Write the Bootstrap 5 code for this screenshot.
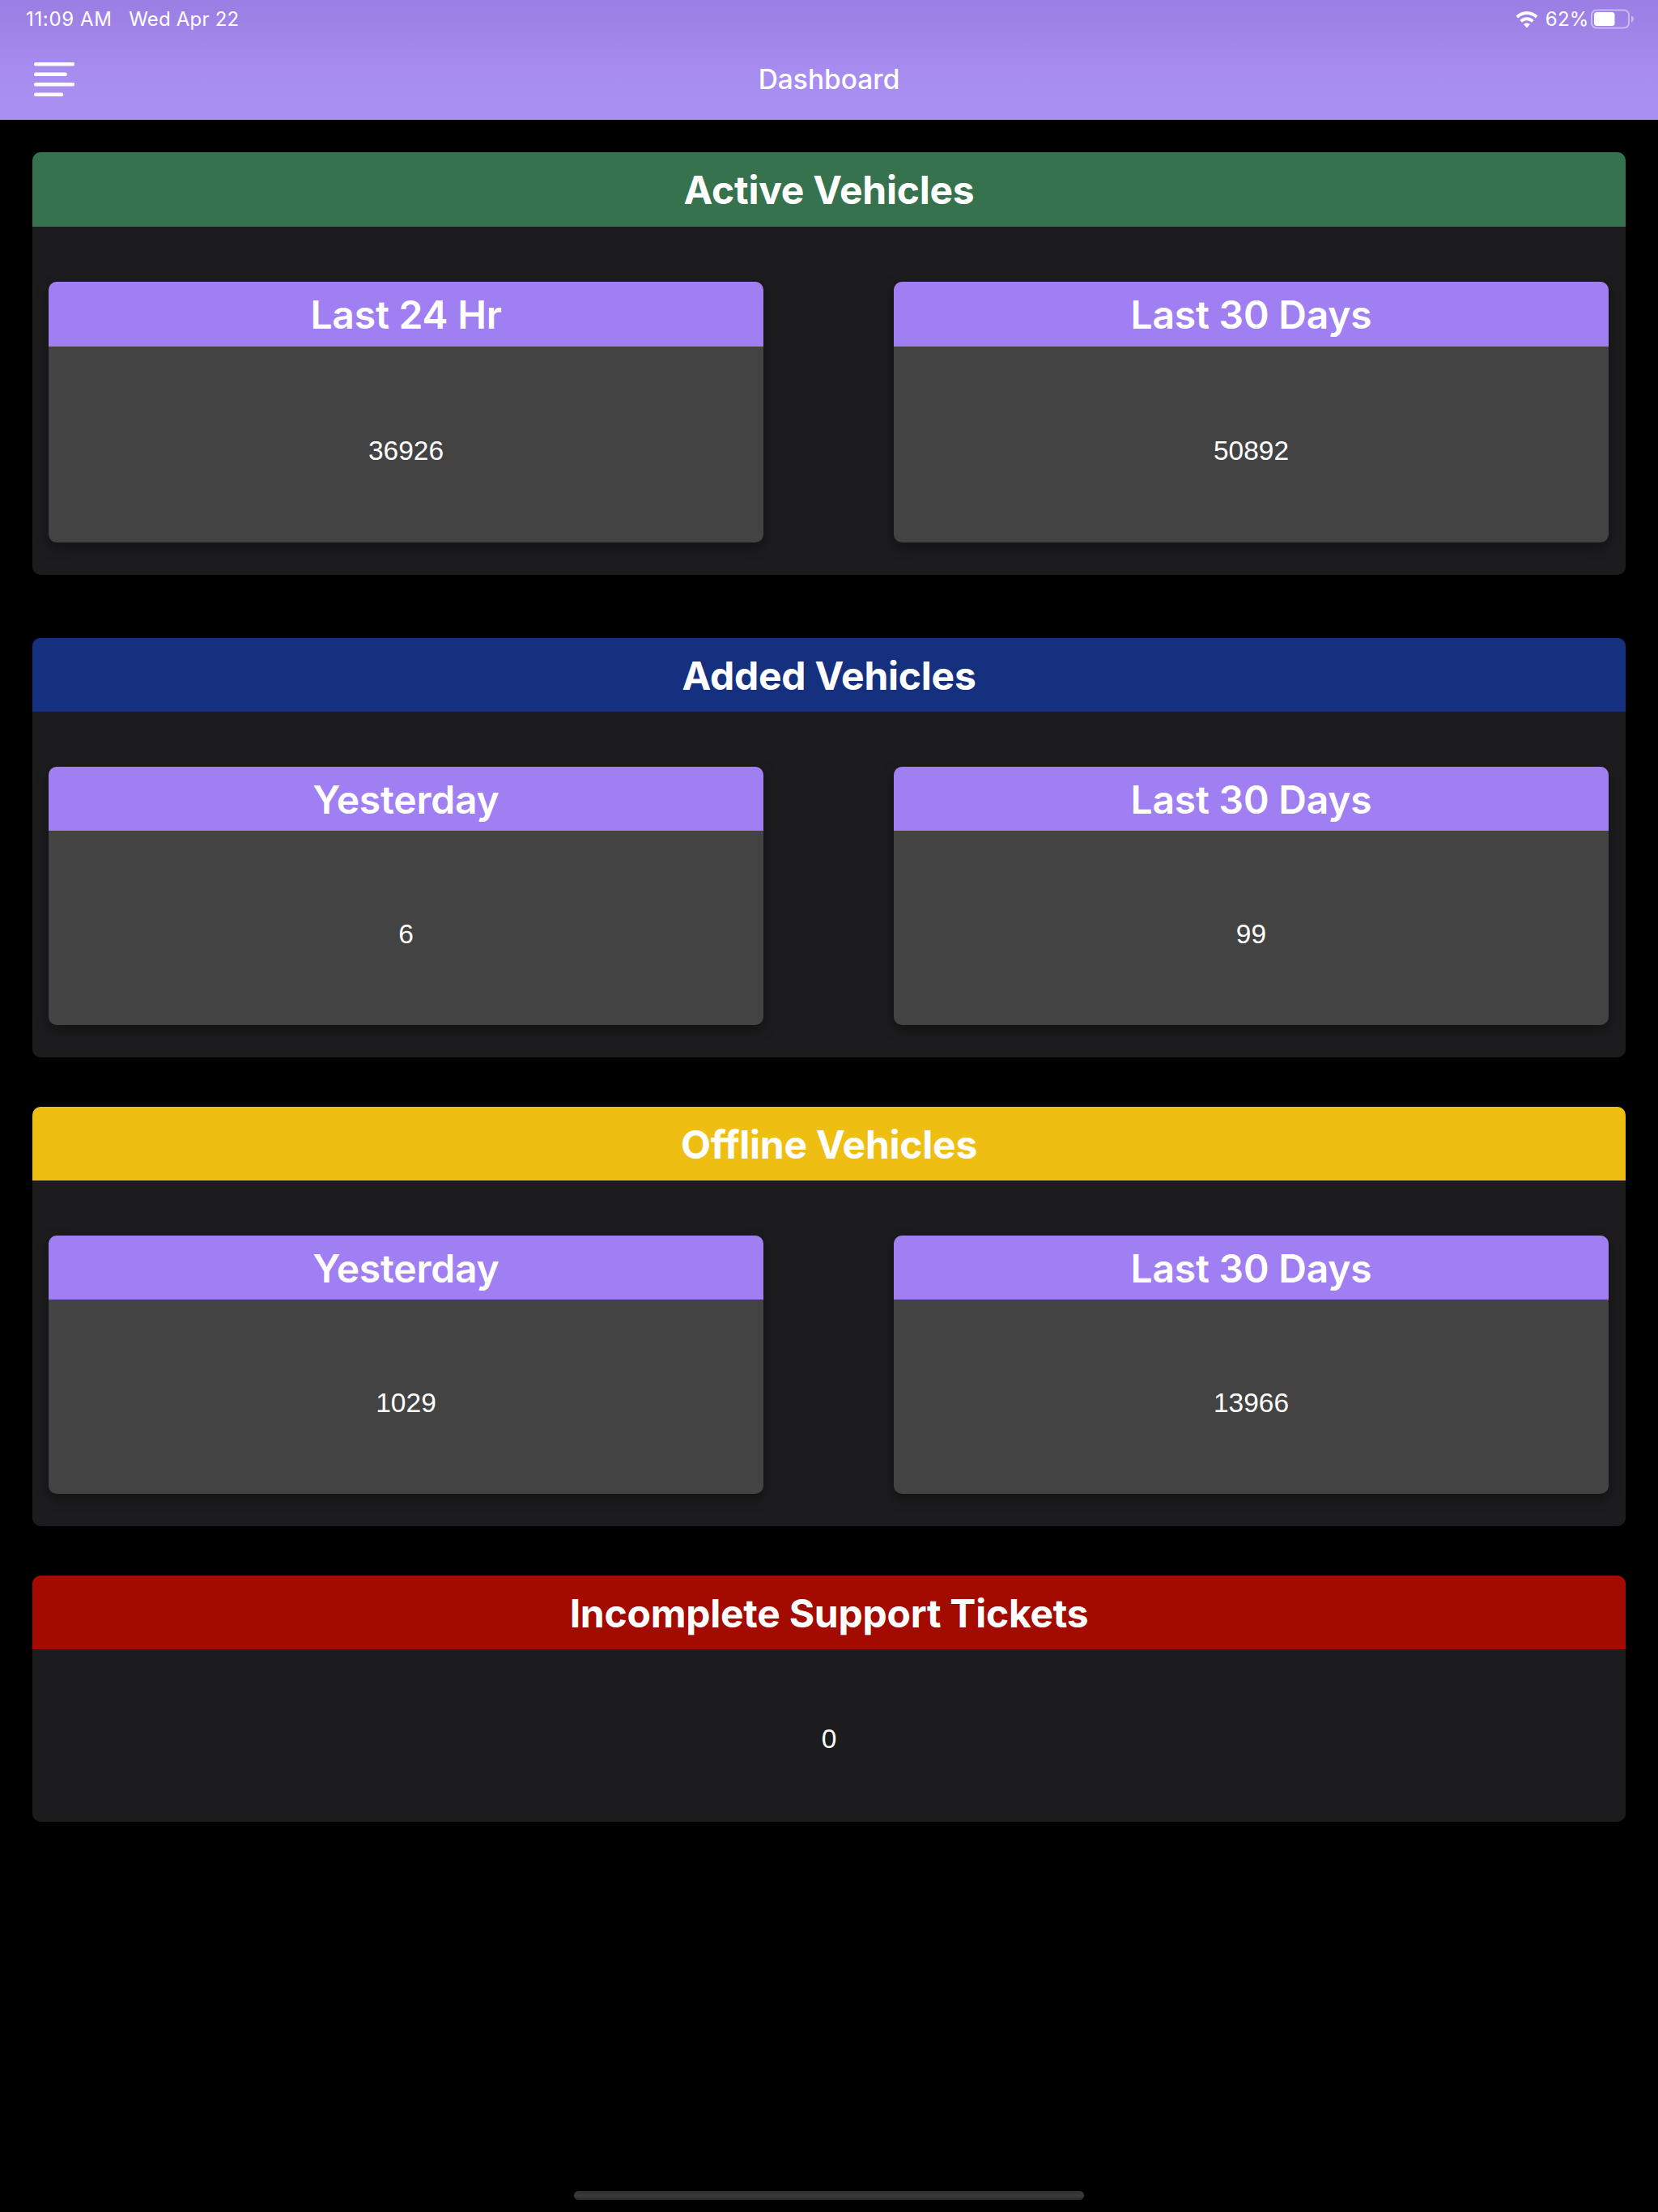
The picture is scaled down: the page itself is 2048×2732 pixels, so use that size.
<!DOCTYPE html>
<html lang="en">
<head>
<meta charset="utf-8">
<title>Dashboard</title>
<link href="https://cdn.jsdelivr.net/npm/bootstrap@5.3.0/dist/css/bootstrap.min.css" rel="stylesheet">
<style>
html, body { background: #000; }
body { font-family: "Inter", "Liberation Sans", sans-serif; color: #fff; min-height: 2732px; }
.app-top { height: 148px; background: linear-gradient(180deg, #9a7ee3 0%, #a88df0 62%, #ab90f4 100%); padding: 0 32px 0 32px; }
.status-line { height: 48px; font-size: 24px; line-height: 48px; letter-spacing: .2px; }
.status-left { gap: 20.5px; }
.clock-text { letter-spacing: .65px; }
.status-right { margin-right: -3px; }
.wifi-mark { margin-right: 9px; }
.battery-mark { margin-left: 2.5px; }
.title-line { height: 100px; }
.burger { width: 50px; height: 42px; margin-left: 10px; margin-top: -1px; display: block; }
.app-title { font-size: 33.5px; font-weight: 500; line-height: 1; flex: 1; text-align: center; margin-left: -60px; padding-top: 1px; }
.page-body { padding: 40px 40px 0; }
.panel.card { background: #1c1c1e; border: 0; border-radius: 10px; overflow: hidden; color: #fff; }
.panel-a { height: 522px; margin-bottom: 78px; }
.panel-b { height: 518px; margin-bottom: 61px; }
.panel-c { height: 304px; }
.panel .panel-head { border: 0; border-radius: 0; padding: 2px 0 0; height: 91px; display: flex; align-items: center; justify-content: center; font-size: 48px; font-weight: 700; line-height: 1; color: #fff; letter-spacing: -.25px; }
.panel-a .panel-head { height: 92px; }
.head-green { background: #37724e; }
.head-blue { background: #14307f; }
.head-yellow { background: #eebf12; }
.head-red { background: #a30a00; }
.panel-row { padding: 68px 21px 0 20px; gap: 161px; }
.tile.card { flex: 1 1 0; background: #434343; border: 0; border-radius: 10px; overflow: hidden; box-shadow: 0 6px 16px rgba(0,0,0,.38); color: #fff; height: 318.5px; }
.panel-a .tile.card { height: 322px; }
.tile .tile-head { background: #9f7ff2; border: 0; border-radius: 0; padding: 2px 0 0; height: 79px; display: flex; align-items: center; justify-content: center; font-size: 48px; font-weight: 600; line-height: 1; letter-spacing: -.2px; color: #fff; }
.panel-a .tile .tile-head { height: 80px; }
.metric { font-family: "Liberation Sans", Arial, sans-serif; font-size: 33.5px; line-height: 1; display: flex; align-items: center; justify-content: center; padding: 15px 0 0; flex: 1; }
.panel-c .metric { padding-top: 8px; }
.home-bar { width: 630px; height: 11px; border-radius: 6px; background: linear-gradient(180deg, #2e2e2e 0%, #3a3a3a 50%, #2c2c2c 100%); margin: auto auto 15px; }
</style>
</head>
<body class="d-flex flex-column">
<header class="app-top">
  <div class="status-line d-flex justify-content-between align-items-center">
    <div class="status-left d-flex"><span class="clock-text">11:09 AM</span><span>Wed Apr 22</span></div>
    <div class="status-right d-flex align-items-center">
      <svg class="wifi-mark" width="28" height="21" viewBox="0 0 28 21" aria-hidden="true"><path fill="#fff" d="M14 0C8.7 0 4 2.1.6 5.6l2.6 2.8C6 5.6 9.8 3.9 14 3.9s8 1.7 10.8 4.5l2.6-2.8C24 2.1 19.3 0 14 0z"/><path fill="#fff" d="M14 7.3c-3.3 0-6.4 1.3-8.6 3.6l2.7 2.8c1.5-1.5 3.6-2.5 5.9-2.5s4.4 1 5.9 2.5l2.7-2.8C20.4 8.6 17.3 7.3 14 7.3z"/><path fill="#fff" d="M14 14.4c-1.6 0-3 .6-4 1.7l4 4.4 4-4.4c-1-1.1-2.4-1.7-4-1.7z"/></svg>
      <span>62%</span>
      <svg class="battery-mark" width="54" height="26" viewBox="0 0 54 26" aria-hidden="true"><rect x="1" y="1.5" width="46" height="22" rx="6" fill="none" stroke="#fff" stroke-opacity=".45" stroke-width="2"/><rect x="4" y="4" width="25.5" height="17" rx="3.5" fill="#fff"/><path d="M50 8.5c2 .6 3 2.2 3 4s-1 3.4-3 4z" fill="#fff" fill-opacity=".45"/></svg>
    </div>
  </div>
  <div class="title-line d-flex align-items-center">
    <svg class="burger" viewBox="0 0 50 42" aria-hidden="true"><g stroke="#fff" stroke-width="4.5" stroke-linecap="round"><path d="M2.2 2.3H48"/><path d="M2.2 14.8H38.6"/><path d="M2.2 27.3H48"/><path d="M2.2 39.7H34"/></g></svg>
    <div class="app-title">Dashboard</div>
  </div>
</header>
<main class="page-body">
  <section class="card panel panel-a">
    <div class="card-header panel-head head-green">Active Vehicles</div>
    <div class="panel-row d-flex">
      <div class="card tile"><div class="card-header tile-head">Last 24 Hr</div><div class="metric">36926</div></div>
      <div class="card tile"><div class="card-header tile-head">Last 30 Days</div><div class="metric">50892</div></div>
    </div>
  </section>
  <section class="card panel panel-b">
    <div class="card-header panel-head head-blue">Added Vehicles</div>
    <div class="panel-row d-flex">
      <div class="card tile"><div class="card-header tile-head">Yesterday</div><div class="metric">6</div></div>
      <div class="card tile"><div class="card-header tile-head">Last 30 Days</div><div class="metric">99</div></div>
    </div>
  </section>
  <section class="card panel panel-b">
    <div class="card-header panel-head head-yellow">Offline Vehicles</div>
    <div class="panel-row d-flex">
      <div class="card tile"><div class="card-header tile-head">Yesterday</div><div class="metric">1029</div></div>
      <div class="card tile"><div class="card-header tile-head">Last 30 Days</div><div class="metric">13966</div></div>
    </div>
  </section>
  <section class="card panel panel-c">
    <div class="card-header panel-head head-red">Incomplete Support Tickets</div>
    <div class="metric">0</div>
  </section>
</main>
<div class="home-bar"></div>
<script src="https://cdn.jsdelivr.net/npm/bootstrap@5.3.0/dist/js/bootstrap.bundle.min.js"></script>
</body>
</html>
